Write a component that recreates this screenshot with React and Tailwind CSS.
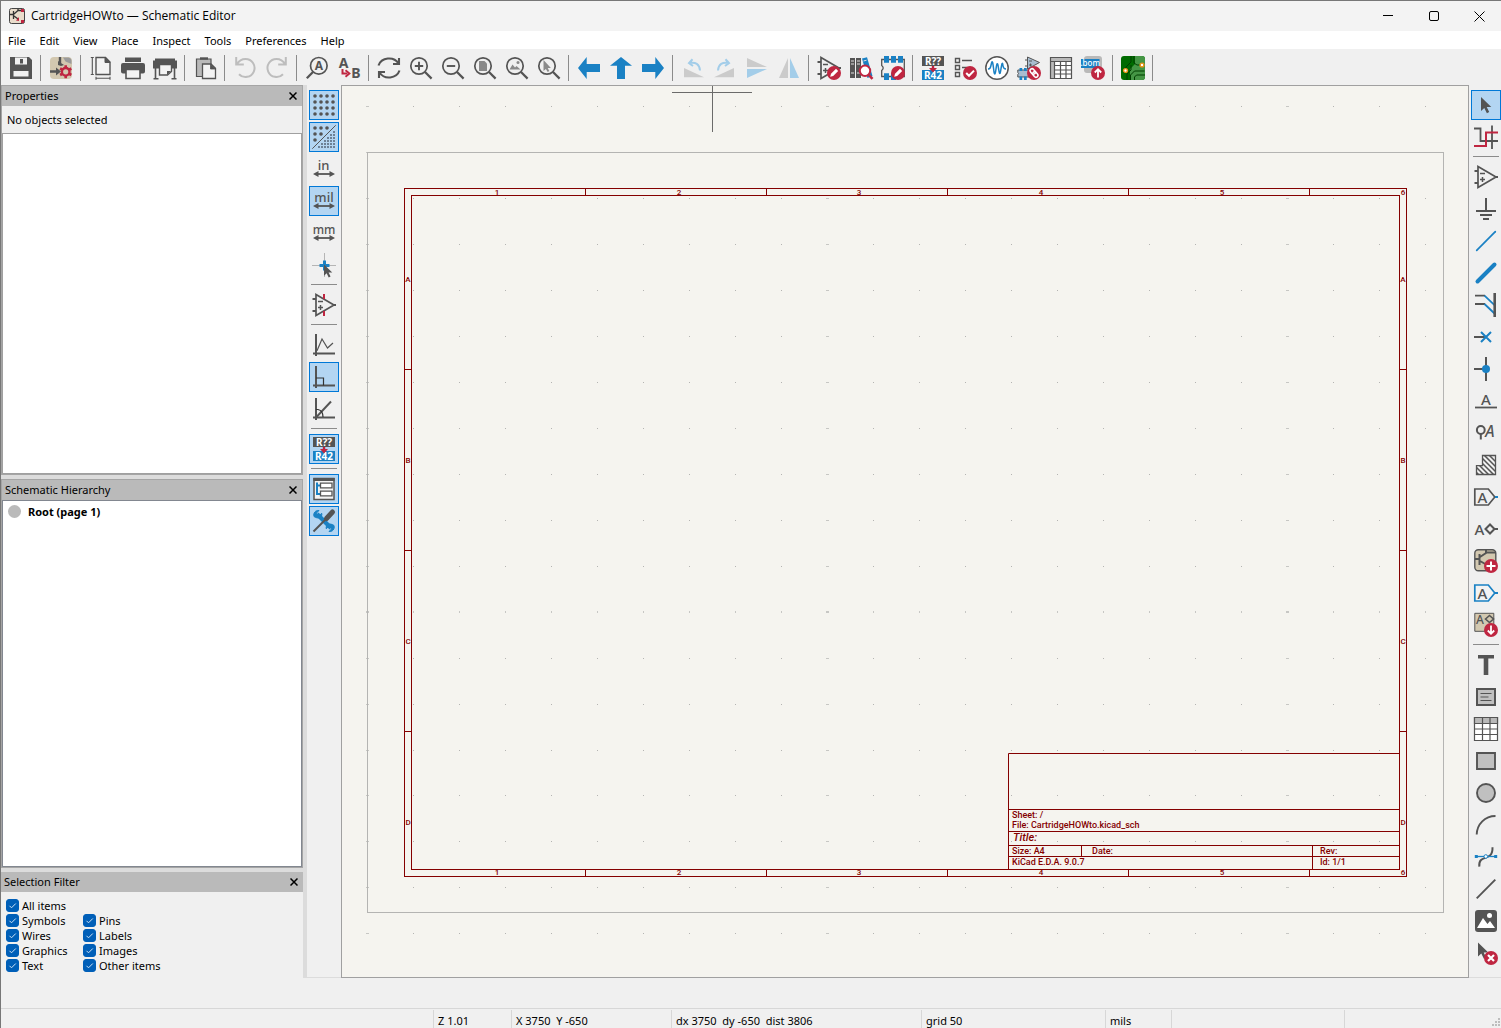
import React from "react";

const D = "#545454";
const B = "#1a81c4";
const R = "#bf2641";
const BEIGE = "#d3c8b0";

function Svg({ children }) {
  return (
    <svg width="24" height="24" viewBox="0 0 24 24" fill="none" aria-hidden="true" className="block shrink-0 overflow-visible">
      {children}
    </svg>
  );
}

function Letter({ x, y, size = 12, fill = D, bold, italic, anchor = "middle", children }) {
  return (
    <text x={x} y={y} fontSize={size} fill={fill} fontWeight={bold ? 700 : 500} fontStyle={italic ? "italic" : "normal"} textAnchor={anchor} fontFamily="'Noto Sans', sans-serif">
      {children}
    </text>
  );
}

/* Red round badge in the lower right corner of an icon */
function Badge({ kind }) {
  return (
    <g>
      <circle cx="17" cy="17" r="7" fill={R} />
      {kind === "pencil" && <path d="M13.2 20.8l.8-3 5-5 2.2 2.2-5 5z" fill="#fff" />}
      {kind === "check" && <path d="M13.2 17l2.8 2.8 5-5.2" stroke="#fff" strokeWidth="2" />}
      {kind === "up" && <path d="M17 21.5v-8M13.8 16.5l3.2-3.3 3.2 3.3" stroke="#fff" strokeWidth="1.8" />}
      {kind === "down" && <path d="M17 12.5v8M13.8 17.5l3.2 3.3 3.2-3.3" stroke="#fff" strokeWidth="1.8" />}
      {kind === "plus" && <path d="M17 12.5v9M12.5 17h9" stroke="#fff" strokeWidth="2" />}
      {kind === "x" && <path d="M14 14l6 6M20 14l-6 6" stroke="#fff" strokeWidth="2.2" />}
      {kind === "link" && (
        <g stroke="#fff" strokeWidth="1.5" transform="rotate(50 17 17)">
          <rect x="12" y="15" width="6" height="4" rx="2" />
          <rect x="16" y="15" width="6" height="4" rx="2" />
        </g>
      )}
    </g>
  );
}

const opamp = (
  <g stroke={D} strokeWidth="1.7">
    <path d="M4 1.5v21L22 12z" />
    <path d="M.5 6H4M.5 18H4M22 12h2" strokeWidth="2" />
    <path d="M6 8.5h5M6 14.5h5M8.5 12v5" strokeWidth="1.5" />
  </g>
);

const lens = (
  <g stroke={D}>
    <circle cx="10" cy="10" r="8.2" strokeWidth="1.7" />
    <path d="M16 16l6.6 6.6" strokeWidth="2.2" />
  </g>
);

const cursorPath = "M0 0v14l3.3-3 2.6 5.2 2.3-1.2-2.5-5h4.6z";

const axes = <path d="M4 1v22M1 20.5h22" stroke={D} strokeWidth="2" />;

const unitArrow = (
  <g>
    <path d="M4 17h16" stroke={D} strokeWidth="1.8" />
    <path d="M1 17l5.500-3v6zM23 17l-5.500-3v6z" fill={D} />
  </g>
);

const annotate = (
  <g>
    <rect x="1" y="0" width="22" height="10" fill={D} />
    <rect x="1" y="14" width="22" height="10" fill={B} />
    <Letter x={12} y={8.7} size={10} bold fill="#fff">R??</Letter>
    <Letter x={12} y={22.8} size={10} bold fill="#fff">R42</Letter>
    <path d="M10.8 10h2.4v2H16l-4 4.5L8 12h2.8z" fill={R} />
  </g>
);

const symbolTile = (
  <g>
    <rect x=".8" y=".8" width="21" height="21" rx="3.5" fill={BEIGE} stroke={D} strokeWidth="1.4" />
    <path d="M1 10h4M5.5 5v11M6 8l6-4V.8M6 12l7 4M12 3.5h10" stroke={D} strokeWidth="2" />
  </g>
);

const icons = {
  save: (
    <g>
      <path d="M1 1h19l3 3v19H1z" fill={D} />
      <path d="M6 1.5h12v7H6zM4.5 15h15v5.5h-15z" fill="#f0f0f0" />
      <rect x="11" y="3" width="3" height="4.5" fill={D} />
    </g>
  ),
  schematicSetup: (
    <g>
      <rect x="1" y="1" width="22" height="22" rx="4" fill={BEIGE} />
      <path d="M11 1v6M1 15.500h6" stroke={D} strokeWidth="2.4" />
      <path d="M7 11.500v8l5-4z" fill={D} />
      <path d="M14 1.500l2.500 4 6 2.500V5q0-3-3-3.500z" fill="#9b9b9b" />
      <path d="M9 5l6 4-3 1-3-1z" fill={D} />
      <circle cx="16.7" cy="15.8" r="3.8" stroke={R} strokeWidth="2.4" />
      <path d="M16.7 9.3v3M16.7 19.3v3M11.1 12.5l2.6 1.5M19.7 17.5l2.6 1.5M11.1 19l2.6-1.5M19.7 14l2.6-1.5" stroke={R} strokeWidth="2.6" />
    </g>
  ),
  page: (
    <g stroke={D}>
      <path d="M7 1.5h9.5l4.5 4.5v12.5H7z" fill="#f3f3f3" strokeWidth="1.4" />
      <path d="M16 1.5v5h5z" fill={D} strokeWidth="1" />
      <path d="M3.3 1.5v17M1.8 1.5h3M1.8 18.5h3M7 22.3h14M7 20.8v3M21 20.8v3" strokeWidth="1.1" />
    </g>
  ),
  print: (
    <g>
      <path d="M4 1.5h16V6H4zM2 7h20q2 0 2 2v6.5q0 2-2 2H2q-2 0-2-2V9q0-2 2-2z" fill={D} />
      <path d="M5 13.5h14v9H5z" fill="#f3f3f3" stroke={D} strokeWidth="1.6" />
    </g>
  ),
  plot: (
    <g>
      <path d="M2 2.5h20v2h2v8H0v-8h2z" fill={D} />
      <path d="M2.5 12v10.5M21.5 12v10.5M.5 22.7h5M18.5 22.7h5" stroke={D} strokeWidth="1.6" />
      <path d="M6.5 8.5h12v7l-4 3.5h-8z" fill="#f3f3f3" stroke={D} strokeWidth="1.4" />
      <path d="M18 15l-4 4v-4z" fill={D} />
    </g>
  ),
  paste: (
    <g stroke={D}>
      <path d="M3.500 3h14.500v17.500H3.500z" fill="#b9b9b9" strokeWidth="1.2" />
      <path d="M7 2.500h8" strokeWidth="2.400" />
      <path d="M9.500 8h8.500l4.500 4.300V22.500H9.500z" fill="#f3f3f3" strokeWidth="1.3" />
      <path d="M17.500 8v5h5z" fill={D} strokeWidth=".8" />
    </g>
  ),
  undo: <path d="M3.2 1v7.5h7.6M3.8 8.3C6 4.5 9 3 12.5 3a9 9 0 1 1-6.5 15.2" stroke="#bdbdbd" strokeWidth="2" />,
  redo: <path d="M20.8 1v7.5h-7.6M20.2 8.3C18 4.5 15 3 11.5 3a9 9 0 1 0 6.500 15.2" stroke="#bdbdbd" strokeWidth="2" />,
  find: (
    <g>
      <circle cx="13.8" cy="9.8" r="8.3" stroke={D} strokeWidth="1.7" />
      <path d="M8 16l-6.2 6.2" stroke={D} strokeWidth="2.3" />
      <Letter x={13.8} y={14} size={12} bold>A</Letter>
    </g>
  ),
  replace: (
    <g>
      <Letter x={6.5} y={11.5} size={14} bold>A</Letter>
      <Letter x={19} y={22} size={14} bold>B</Letter>
      <path d="M5.5 13v4.5h5" stroke={R} strokeWidth="2" />
      <path d="M8.5 14.2l4 3.3-4 3.3" stroke={R} strokeWidth="1.8" />
    </g>
  ),
  refresh: (
    <g stroke={D} strokeWidth="2.1">
      <path d="M1.5 9.5A11 10 0 0 1 21.5 7.5M22 2v6h-6M22.5 14.5A11 10 0 0 1 2.5 16.5M2 22v-6h6" />
    </g>
  ),
  zoomIn: <g>{lens}<path d="M10 5.8v8.4M5.8 10h8.4" stroke={D} strokeWidth="1.9" /></g>,
  zoomOut: <g>{lens}<path d="M5.8 10h8.4" stroke={D} strokeWidth="1.9" /></g>,
  zoomPage: <g>{lens}<path d="M6 5h5.500L14 7.500V15H6z" fill="#8a8a8a" /></g>,
  zoomObjects: <g>{lens}<path d="M4.500 13.500l3-5 2.500 3 1.500-1.500 4 3.500z" fill="#8a8a8a" /><circle cx="13" cy="6.500" r="1.500" fill="#8a8a8a" /></g>,
  zoomSelection: <g>{lens}<path d="M6.500 4v11l2.400-2 1.800 3 1.600-1-1.600-3h3.200z" fill="#8a8a8a" /></g>,
  left: <path d="M1 12L9.700 1v7H23v8H9.700v7z" fill={B} />,
  up: <path d="M12 1L23 9.700h-7V23H8V9.700H1z" fill={B} />,
  right: <path d="M23 12L14.300 1v7H1v8h13.300v7z" fill={B} />,
  rotateLeft: (
    <g>
      <path d="M3 12v9.200h20z" fill="#cbcbcb" />
      <path d="M11.500 3.200L8 7l4 3M8.500 7c6-1 10 1 10.500 7.500" stroke="#a3cde9" strokeWidth="2" />
    </g>
  ),
  rotateRight: (
    <g>
      <path d="M21 12v9.200H1z" fill="#cbcbcb" />
      <path d="M12.500 3.200L16 7l-4 3M15.500 7C9.500 6 5.500 8 5 14.500" stroke="#a3cde9" strokeWidth="2" />
    </g>
  ),
  mirrorV: <g><path d="M2 2v9h20z" fill="#cbcbcb" /><path d="M2 22v-9h20z" fill="#a3cde9" /></g>,
  mirrorH: <g><path d="M2 22h9V2z" fill="#cbcbcb" /><path d="M22 22h-9V2z" fill="#a3cde9" /></g>,
  symbolEditor: <g>{opamp}<Badge kind="pencil" /></g>,
  library: (
    <g>
      <path d="M1 2h5v20H1zM7 2h5v20H7z" fill={D} />
      <path d="M13 2.500l5-1.200L23.500 20l-5 2z" fill={B} />
      <path d="M2 5h3M2 8h3M2 17h3M8 5h3M8 8h3M8 17h3M14.500 5l3-.8" stroke="#dedede" strokeWidth="1" />
      <circle cx="16" cy="14.800" r="5.200" fill="#fff" stroke={R} strokeWidth="2" />
      <path d="M19.800 18.800l3.700 4" stroke={R} strokeWidth="2.600" />
    </g>
  ),
  footprintEditor: (
    <g>
      <path d="M2 3.500h21.300v17H.7v-6q3-2.500 0-5v-6H3" stroke={D} strokeWidth="1.300" />
      <path d="M3 0h5v6.700H3zM10 0h5v6.700h-5zM17 0h5v6.700h-5zM3 17.300h5V24H3zM10 17.300h5V24h-5z" fill={B} />
      <Badge kind="pencil" />
    </g>
  ),
  annotate,
  erc: (
    <g>
      <path d="M2.500 2.500h4v4h-4zM2.500 9.500h4v4h-4zM2.500 16.500h4v4h-4zM9 4.500h10M9 11.500h5" stroke={D} strokeWidth="1.400" />
      <Badge kind="check" />
    </g>
  ),
  simulator: (
    <g>
      <circle cx="12" cy="12" r="11.200" fill="#fff" stroke={D} strokeWidth="1.500" />
      <path d="M3 13c2 0 2.500-1 3.300-5C7.500 2.500 8 8 9 16c.8 4 1.500 1 2-3 .8-6 1.500-7 2.300-2 .8 5 1.500 10 2.500 3C17 6 17.500 6 18 10c.4 2.500 1 3 3 3" stroke={B} strokeWidth="1.500" />
    </g>
  ),
  assign: (
    <g>
      <path d="M10.500 1v12l12-6.500z" fill="#a8bdd0" stroke={D} strokeWidth="1" />
      <path d="M8 4h2.500M8 10h2.500M12 5h3M12 9h3M13.500 7.500v3" stroke={D} strokeWidth="1" />
      <path d="M.8 14h15v7H.8v-2.500q1.500-1 0-2z" fill="#a8bdd0" stroke={D} strokeWidth="1" />
      <path d="M2.500 12h2.700v3H2.500zM7 12h2.700v3H7zM2.500 20.500h2.700v3.500H2.500zM7 20.500h2.700v3.500H7z" fill={B} />
      <Badge kind="link" />
    </g>
  ),
  fields: (
    <g stroke={D}>
      <path d="M1.500 1.500h21v21h-21z" fill="#fff" />
      <path d="M1.500 2h21v3h-21zM1.500 5H5v17H1.500z" fill="#b9b9b9" stroke="none" />
      <path d="M1.500 1.500h21v21h-21zM1.500 5.500h21M5.500 5.500v17M11.500 5.500v17M17 5.500v17M5.500 9.500h17M5.500 14h17M5.500 18h17" strokeWidth="1.200" />
    </g>
  ),
  bom: (
    <g>
      <rect x="3" y="0" width="18" height="17" rx="3" fill="#b9b9b9" />
      <rect x="0" y="3" width="18.500" height="9" fill={B} />
      <Letter x={9.2} y={10.4} size={8} fill="#fff">.bom</Letter>
      <Badge kind="up" />
    </g>
  ),
  pcb: (
    <g>
      <rect width="24" height="24" rx="3" fill="#006b00" />
      <path d="M14 0h7q3 0 3 3v18q0 3-3 3H9V13l5-5z" fill="#459645" />
      <path d="M10 0v6l-5 5v3M13 0v7l3 2h5M6 24v-6l4-4V9M9.500 24v-5l4-4h10M13.500 24v-3l2-2H24" stroke="#003f00" strokeWidth="1" />
      <circle cx="21" cy="9" r="1.900" fill="#fff" stroke="#e99115" strokeWidth="1.400" />
      <circle cx="4.500" cy="14.500" r="1.900" fill="#fff" stroke="#e99115" strokeWidth="1.400" />
    </g>
  ),
  grid: (
    <g fill={D}>
      {[3, 9, 15, 21].map((y) => [3, 9, 15, 21].map((x) => <circle key={x + "-" + y} cx={x} cy={y} r="1.800" />))}
    </g>
  ),
  gridOverride: (
    <g fill={D}>
      {[[3, 3], [9, 3], [15, 3], [3, 9], [9, 9], [3, 15]].map(([x, y]) => <circle key={x + "-" + y} cx={x} cy={y} r="1.800" />)}
      <path d="M.3 23.700L23.700.3" stroke={D} strokeWidth="1" />
      {[0, 1, 2, 3, 4, 5].map((r) => Array.from({ length: r + 1 }, (_, c) => (
        <rect key={r + "-" + c} x={21 - c * 3} y={6 + r * 3} width="2" height="2" fill="#6d8196" />
      )))}
    </g>
  ),
  inch: <g><Letter x={11.5} y={13} size={13}>in</Letter>{unitArrow}</g>,
  mil: <g><Letter x={12} y={13} size={13}>mil</Letter>{unitArrow}</g>,
  mm: <g><Letter x={12} y={13} size={12}>mm</Letter>{unitArrow}</g>,
  crosshair: (
    <g>
      <path d="M12.500 0v24M0 12.500h24" stroke="#b5b5b5" strokeWidth="1" />
      <path d="M12.500 7.500v10M7.500 12.500h10" stroke={B} strokeWidth="3" />
      <g transform="translate(12 11.500) scale(.8)"><path d={cursorPath} fill={D} /></g>
    </g>
  ),
  hiddenPins: <g>{opamp}<path d="M12 1v5M12 18v5" stroke={R} strokeWidth="2" /></g>,
  lineFree: <g>{axes}<path d="M5 17.700L10 6l5.500 9 5.500-5" stroke={D} strokeWidth="1.200" /></g>,
  line90: <g>{axes}<path d="M4 13h7.500v7.500" stroke="#333" strokeWidth="1.200" /></g>,
  line45: <g>{axes}<path d="M4 20.500L19 4.500" stroke={D} strokeWidth="2" /><path d="M4 12.500h2q5 1 5 7.500" stroke="#333" strokeWidth="1.200" /></g>,
  hierarchy: (
    <g>
      <path d="M2 1.500h20v21H2z" fill="#f3f3f3" stroke={D} strokeWidth="1.500" />
      <path d="M1.300 1h21.400v3H1.300z" fill={D} />
      <path d="M5 5.500V17h3M5 8.500h3" stroke={B} strokeWidth="2" />
      <path d="M8.500 6.200h11.500v4.600H8.500zM8.500 14.200h11.500v4.600H8.500z" fill="#fff" stroke={D} strokeWidth="1.300" />
    </g>
  ),
  tools: (
    <g>
      <path d="M5 5l14 14" stroke={B} strokeWidth="4.200" />
      <path d="M2 7.500C1 4 3.500 1 7 1.500L4.500 4l.7 2 2 .7 2.500-2.500c1 4-3.200 6.500-7.700 3.300z" fill={B} stroke={B} strokeWidth="1" />
      <path d="M22 16.500c1 3.500-1.500 6.500-5 6l2.500-2.500-.7-2-2-.7-2.500 2.500c-1-4 3.200-6.500 7.700-3.300z" fill={B} stroke={B} strokeWidth="1" />
      <path d="M1.500 22.500L15 9" stroke={D} strokeWidth="2" />
      <path d="M14.500 9.500l6-6.500" stroke={D} strokeWidth="5" strokeLinecap="round" />
    </g>
  ),
  select: <g transform="translate(7 4)"><path d={cursorPath} fill={D} /></g>,
  highlight: (
    <g>
      <path d="M0 3.500h6.500V16H12M12 16h12M18 .500V24" stroke={D} strokeWidth="1.800" />
      <path d="M0 21h12V7.500h12" stroke={R} strokeWidth="2" />
    </g>
  ),
  opamp,
  power: <path d="M12 1v13M2 14h20M6 18h12M9 22h6" stroke={D} strokeWidth="2" />,
  wire: <path d="M2.700 21.300L21.300 2.700" stroke={B} strokeWidth="1.700" strokeLinecap="round" />,
  bus: <path d="M3.500 20.500l17-17" stroke={B} strokeWidth="4" strokeLinecap="round" />,
  busEntry: (
    <g>
      <path d="M1 2.700h10M1 11h10" stroke={D} strokeWidth="1.800" />
      <path d="M10.500 2.700l10 9.500M10.500 11l10 9.500" stroke={B} strokeWidth="1.800" />
      <path d="M20.700 0v24" stroke={D} strokeWidth="2.600" />
    </g>
  ),
  noConnect: <g><path d="M0 12h12" stroke={D} strokeWidth="2" /><path d="M7 7l10 10M17 7L7 17" stroke={B} strokeWidth="2" /></g>,
  junction: <g><path d="M0 12h12M12 0v24" stroke={D} strokeWidth="2" /><circle cx="12" cy="12" r="4" fill={B} /></g>,
  label: <g><Letter x={12} y={15.5} size={15}>A</Letter><path d="M1 18.500h22" stroke={D} strokeWidth="1.800" /></g>,
  netclass: <g><circle cx="6.800" cy="9" r="3.900" stroke={D} strokeWidth="2" /><path d="M6.800 13v5.500" stroke={D} strokeWidth="2" /><Letter x={16} y={15.5} size={16} italic>A</Letter></g>,
  ruleArea: (
    <g stroke={D}>
      <clipPath id="hatch-area"><path d="M2.500 12.700h6V2.500h13v19h-19z" /></clipPath>
      <g clipPath="url(#hatch-area)" strokeWidth="1.500">
        <path d="M-9-2l26 26M-4-2l26 26M1-2l26 26M6-2l26 26M11-2l26 26M-14-2l26 26M-19-2l26 26" />
      </g>
      <path d="M2.500 12.700h6V2.500h13v19h-19z" strokeWidth="1.300" />
    </g>
  ),
  globalLabel: <g><path d="M.8 4h13.500l6.500 8-6.500 8H.8z" stroke={D} strokeWidth="1.700" /><path d="M21 12h3" stroke={B} strokeWidth="2" /><Letter x={8.5} y={17.5} size={15}>A</Letter></g>,
  hierLabel: <g><Letter x={5.5} y={17.5} size={15}>A</Letter><path d="M11.500 12l4.500-4.500 4.500 4.500-4.500 4.500zM20.500 12H24" stroke={D} strokeWidth="2" /></g>,
  addSheet: <g>{symbolTile}<Badge kind="plus" /></g>,
  sheetPin: <g><path d="M.8 4h13.500l6.500 8-6.500 8H.8z" fill="#f3f3f3" stroke={B} strokeWidth="1.700" /><path d="M21 12h3" stroke={B} strokeWidth="2" /><Letter x={8.5} y={17.5} size={15}>A</Letter></g>,
  importPins: (
    <g>
      <path d="M.8.300h19v18H.8z" fill={BEIGE} stroke={D} strokeWidth="1" />
      <Letter x={6} y={10.5} size={12}>A</Letter>
      <path d="M11.500 6l4-3.500L19.500 6l-4 3.500z" stroke={D} strokeWidth="1.600" />
      <Badge kind="down" />
    </g>
  ),
  text: <path d="M4 2h16v3.500h-5.700V22H9.700V5.500H4z" fill={D} />,
  textBox: <g><path d="M3 4h18v16H3z" fill="#c0c0c0" stroke={D} strokeWidth="2" /><path d="M6.500 8.500h11M6.500 12h8M6.500 15.500h11" stroke={D} strokeWidth="1.200" /></g>,
  table: (
    <g stroke={D} strokeWidth="1.200">
      <path d="M.5.500h23v23H.5z" fill="#fff" />
      <path d="M.5.500h23v6H.5z" fill="#b9b9b9" />
      <path d="M8.500.500v23M16 .500v23M.5 12h23M.5 17.500h23" />
    </g>
  ),
  rect: <path d="M3 4h18v16H3z" fill="#c0c0c0" stroke={D} strokeWidth="1.900" />,
  circle: <circle cx="12" cy="12" r="9" fill="#c0c0c0" stroke={D} strokeWidth="1.900" />,
  arc: <path d="M2.700 21.500C3 11 11 3 21.500 3" stroke={D} strokeWidth="1.900" />,
  bezier: (
    <g>
      <path d="M5.300 21.700C4 8 19 18 18.500 2.300" stroke={D} strokeWidth="2" />
      <path d="M2 11.500h20" stroke={B} strokeWidth="1.300" />
      <path d="M.8 10h3v3h-3zM20.200 10h3v3h-3z" fill={B} />
      <circle cx="11.800" cy="11.500" r="1.800" fill="#fff" stroke={B} />
    </g>
  ),
  line: <path d="M2.700 21.300L21.300 2.700" stroke={D} strokeWidth="1.900" />,
  image: <g><rect x="1" y="1" width="22" height="22" rx="3" fill={D} /><path d="M3 19l6-10 4.500 6 2.500-3 5 7z" fill="#fff" /><circle cx="15.500" cy="6.500" r="2.500" fill="#fff" /></g>,
  delete: <g><g transform="translate(4 1.500)"><path d={cursorPath} fill={D} /></g><Badge kind="x" /></g>,
};

const topTools = [
  ["save", "Save"], null, ["schematicSetup", "Schematic setup"], null,
  ["page", "Page settings"], ["print", "Print"], ["plot", "Plot"], null,
  ["paste", "Paste"], null, ["undo", "Undo"], ["redo", "Redo"], null,
  ["find", "Find"], ["replace", "Find and replace"], null,
  ["refresh", "Refresh"], ["zoomIn", "Zoom in"], ["zoomOut", "Zoom out"], ["zoomPage", "Zoom to fit"], ["zoomObjects", "Zoom to objects"], ["zoomSelection", "Zoom to selection"], null,
  ["left", "Navigate back"], ["up", "Navigate up"], ["right", "Navigate forward"], null,
  ["rotateLeft", "Rotate counterclockwise"], ["rotateRight", "Rotate clockwise"], ["mirrorV", "Mirror vertically"], ["mirrorH", "Mirror horizontally"], null,
  ["symbolEditor", "Symbol editor"], ["library", "Symbol library browser"], ["footprintEditor", "Footprint editor"], null,
  ["annotate", "Annotate"], ["erc", "Electrical rules checker"], ["simulator", "Simulator"], ["assign", "Assign footprints"], ["fields", "Symbol fields table"], ["bom", "Generate BOM"], null,
  ["pcb", "Open PCB editor"], null,
];

const leftTools = [
  ["grid", "Show grid", true], ["gridOverride", "Grid overrides", true], ["inch", "Inches"], ["mil", "Mils", true], ["mm", "Millimeters"], ["crosshair", "Full-window crosshairs"], null,
  ["hiddenPins", "Show hidden pins"], null,
  ["lineFree", "Any angle lines"], ["line90", "90 degree lines", true], ["line45", "45 degree lines"], null,
  ["annotate", "Annotate automatically", true], null,
  ["hierarchy", "Hierarchy navigator", true], ["tools", "Properties manager", true],
];

const rightTools = [
  ["select", "Select items", true], ["highlight", "Highlight nets"], null,
  ["opamp", "Place symbols"], ["power", "Place power symbols"], ["wire", "Draw wires"], ["bus", "Draw buses"], ["busEntry", "Wire to bus entries"], ["noConnect", "No connect flags"], ["junction", "Junctions"], ["label", "Net labels"], ["netclass", "Net class directives"], ["ruleArea", "Rule areas"], ["globalLabel", "Global labels"], ["hierLabel", "Hierarchical labels"], ["addSheet", "Hierarchical sheets"], ["sheetPin", "Sheet pins"], ["importPins", "Sync sheet pins"], null,
  ["text", "Text"], ["textBox", "Text boxes"], ["table", "Tables"], ["rect", "Rectangles"], ["circle", "Circles"], ["arc", "Arcs"], ["bezier", "Bezier curves"], ["line", "Lines"], ["image", "Images"], ["delete", "Delete tool"],
];

function SideToolbar({ items, label }) {
  return (
    <div role="toolbar" aria-label={label} className="flex shrink-0 flex-col items-center pt-1">
      {items.map((t, i) =>
        t ? (
          <button
            key={i}
            type="button"
            aria-label={t[1]}
            aria-pressed={!!t[2]}
            className={t[2] ? "my-px grid size-[30px] place-items-center border border-[#0078d7] bg-[#b3d5f2]" : "my-px grid size-[30px] place-items-center"}
          >
            <Svg>{icons[t[0]]}</Svg>
          </button>
        ) : (
          <div key={i} className="h-2 w-[26px] pt-[3px]"><div className="h-px w-full bg-[#8b8b8b]" /></div>
        )
      )}
    </div>
  );
}

function PanelHeader({ title }) {
  return (
    <div className="flex h-5 shrink-0 items-center justify-between bg-[#bababa] pl-[3px] pr-[3px]">
      <h2>{title}</h2>
      <button type="button" aria-label={"Close " + title} className="grid size-3 place-items-center">
        <svg width="8" height="8" viewBox="0 0 8 8" aria-hidden="true"><path d="M.5.500l7 7M7.500.500l-7 7" stroke="#000" strokeWidth="1.500" /></svg>
      </button>
    </div>
  );
}

function Check({ label }) {
  return (
    <label className="flex h-[15px] items-center gap-[3px]">
      <span className="grid size-[13px] place-items-center">
        <input type="checkbox" defaultChecked className="peer col-start-1 row-start-1 size-[13px] appearance-none rounded-[3px] border border-[#8a8a8a] bg-white checked:border-[#005fb8] checked:bg-[#005fb8]" />
        <svg width="9" height="9" viewBox="0 0 9 9" fill="none" aria-hidden="true" className="pointer-events-none invisible col-start-1 row-start-1 peer-checked:visible">
          <path d="M1.500 4.800l2 2L7.800 2.500" stroke="#cfe2f5" strokeWidth="1" />
        </svg>
      </span>
      {label}
    </label>
  );
}

const dots = [];
for (let r = 0; r < 19; r++) {
  for (let c = 0; c < 24; c++) {
    dots.push([Math.round(25 + c * 46), Math.round(20.35 + r * 45.94), c % 10 === 0, r === 11]);
  }
}

function SheetText({ x, y, size = 9, italic, anchor = "start", children }) {
  return (
    <text x={x} y={y} fontSize={size} fill="#840000" stroke="none" fontStyle={italic ? "italic" : "normal"} fontWeight="500" textAnchor={anchor} fontFamily="Roboto, 'Liberation Sans', sans-serif">
      {children}
    </text>
  );
}

/* Drawing sheet, one unit per pixel */
function Sheet() {
  const cols = [154, 336, 516, 698, 879, 1060];
  const rows = [193, 374, 555, 736];
  return (
    <svg className="block h-full w-full" role="img" aria-label="Schematic sheet">
      <g fill="#b4b4b2">
        {dots.map(([x, y, wide, tall], i) => (
          <rect key={i} x={wide ? x - 1 : x} y={tall ? y - 1 : y} width={wide ? 3 : 1} height={tall ? 2 : 1} opacity={wide || tall ? 0.7 : 1} />
        ))}
      </g>
      <rect x="25.500" y="66.500" width="1076" height="760" fill="none" stroke="#b4b4b2" />
      <g fill="none" stroke="#840000">
        <rect x="62.500" y="102.500" width="1002" height="688" />
        <rect x="69.500" y="109.500" width="988" height="674" />
        <path d="M243.500 103v6M424.500 103v6M605.500 103v6M786.500 103v6M967.500 103v6" />
        <path d="M243.500 784v6M424.500 784v6M605.500 784v6M786.500 784v6M967.500 784v6" />
        <path d="M63 283.500h6M63 464.500h6M63 645.500h6M1058 283.500h6M1058 464.500h6M1058 645.500h6" />
        <path d="M666.500 783V667.500H1057M667 723.500h390M667 745.500h390M667 759.500h390M667 770.500h390M739.500 760v10M970.500 760v23" />
      </g>
      {cols.map((x, i) => (
        <g key={x}>
          <SheetText x={x + 1} y={109} size={8} anchor="middle">{i + 1}</SheetText>
          <SheetText x={x + 1} y={789} size={8} anchor="middle">{i + 1}</SheetText>
        </g>
      ))}
      {rows.map((y, i) => (
        <g key={y}>
          <SheetText x={66} y={y + 3} size={8} anchor="middle">{"ABCD"[i]}</SheetText>
          <SheetText x={1061} y={y + 3} size={8} anchor="middle">{"ABCD"[i]}</SheetText>
        </g>
      ))}
      <SheetText x={670} y={732}>Sheet: /</SheetText>
      <SheetText x={670} y={742}>File: CartridgeHOWto.kicad_sch</SheetText>
      <SheetText x={671} y={755} size={11} italic>Title:</SheetText>
      <SheetText x={670} y={768}>Size: A4</SheetText>
      <SheetText x={750} y={768}>Date:</SheetText>
      <SheetText x={978} y={768}>Rev:</SheetText>
      <SheetText x={670} y={779}>KiCad E.D.A. 9.0.7</SheetText>
      <SheetText x={978} y={779}>Id: 1/1</SheetText>
      <path d="M330 6.500h80M370.500 0v46" stroke="#6b6b6a" />
    </svg>
  );
}

const menus = ["File", "Edit", "View", "Place", "Inspect", "Tools", "Preferences", "Help"];

export default function App() {
  return (
    <div className="flex min-h-screen flex-col border-l border-t border-[#777] bg-[#f0f0f0] font-['Noto_Sans',sans-serif] text-[11px] leading-4 text-black">
      <header className="flex h-[30px] shrink-0 items-center justify-between bg-[#f3f3f3] pl-2">
        <div className="flex items-center gap-1.5">
          <svg width="16" height="16" viewBox="0 0 16 16" fill="none" aria-hidden="true">
            <rect x=".5" y=".5" width="15" height="15" rx="2" fill="#e9dccb" stroke="#444" />
            <path d="M1 6.500h3M4.500 3v8M5 6l4-3.500V1M5 8l4 3M9 2.500h6" stroke="#333" strokeWidth="1.300" />
            <path d="M10 13V9l-3 3.500z" fill={R} />
            <path d="M12 1h3v3h-3zM12 12h3v3h-3z" fill={R} />
          </svg>
          <h1 className="font-['Open_Sans',sans-serif] text-xs">CartridgeHOWto — Schematic Editor</h1>
        </div>
        <div className="flex">
          <button type="button" aria-label="Minimize" className="grid h-[30px] w-[46px] place-items-center"><svg width="11" height="11" viewBox="0 0 11 11"><path d="M0 4.500h10" stroke="#000" /></svg></button>
          <button type="button" aria-label="Maximize" className="grid h-[30px] w-[46px] place-items-center"><svg width="11" height="11" viewBox="0 0 11 11" fill="none"><rect x=".5" y=".5" width="9" height="9" rx="1.500" stroke="#000" /></svg></button>
          <button type="button" aria-label="Close" className="grid h-[30px] w-[44px] place-items-center"><svg width="11" height="11" viewBox="0 0 11 11"><path d="M.5.500l10 10M10.500.500l-10 10" stroke="#000" /></svg></button>
        </div>
      </header>

      <nav aria-label="Main menu" className="flex h-[18px] shrink-0 items-center bg-white pt-0.5">
        {menus.map((m) => <button key={m} type="button" className="px-[7px]">{m}</button>)}
      </nav>

      <div role="toolbar" aria-label="Main toolbar" className="flex h-9 shrink-0 items-center pl-1 pt-[2px]">
        {topTools.map((t, i) =>
          t ? (
            <button key={i} type="button" aria-label={t[1]} className="grid size-8 shrink-0 place-items-center"><Svg>{icons[t[0]]}</Svg></button>
          ) : (
            <div key={i} className="w-2 shrink-0 pl-[3px]"><div className="h-[26px] w-px bg-[#8b8b8b]" /></div>
          )
        )}
      </div>

      <main className="flex flex-1">
        <aside className="flex w-[306px] shrink-0 flex-col gap-1 border-r-4 border-[#dcdcdc] bg-[#dcdcdc]">
          <section className="flex flex-1 flex-col border border-[#a5a5a5] bg-[#f0f0f0]">
            <PanelHeader title="Properties" />
            <p className="px-[5px] pb-[5px] pt-1.5">No objects selected</p>
            <div className="flex-1 border border-[#a0a0a0] bg-white" />
          </section>
          <section className="flex flex-1 flex-col border border-[#a5a5a5] bg-[#f0f0f0]">
            <PanelHeader title="Schematic Hierarchy" />
            <ul className="flex-1 border border-[#828790] bg-white px-[5px] pt-[3px]">
              <li className="flex items-center gap-[7px] font-bold">
                <span className="size-[13px] rounded-full bg-[#bababa]" />
                Root (page 1)
              </li>
            </ul>
          </section>
          <section className="bg-[#f0f0f0]">
            <PanelHeader title="Selection Filter" />
            <div className="grid w-max grid-cols-[77px_auto] px-[5px] pb-[5px] pt-1.5">
              <div className="col-span-2"><Check label="All items" /></div>
              {["Symbols", "Pins", "Wires", "Labels", "Graphics", "Images", "Text", "Other items"].map((l) => <Check key={l} label={l} />)}
            </div>
          </section>
        </aside>

        <div className="flex w-[34px] shrink-0 flex-col items-center border-b border-[#dcdcdc]">
          <SideToolbar items={leftTools} label="Display options" />
        </div>

        <div className="relative min-w-0 flex-1 border border-[#a0a0a0] bg-[#f5f4ef]">
          <div className="absolute inset-0"><Sheet /></div>
        </div>

        <div className="flex w-8 shrink-0 justify-end border-b border-[#dcdcdc]">
          <SideToolbar items={rightTools} label="Drawing tools" />
        </div>
      </main>

      <div className="h-[30px] shrink-0" />

      <footer className="flex h-5 shrink-0 items-end border-t border-[#d7d7d7]">
        <div className="h-[18px] flex-1 border-r border-[#d7d7d7]" />
        <div className="h-[18px] w-[78px] border-r border-[#d7d7d7] px-1 pt-[3px]">Z 1.01</div>
        <div className="h-[18px] w-[160px] whitespace-pre border-r border-[#d7d7d7] px-1 pt-[3px]">X 3750  Y -650</div>
        <div className="h-[18px] w-[250px] whitespace-pre border-r border-[#d7d7d7] px-1 pt-[3px]">dx 3750  dy -650  dist 3806</div>
        <div className="h-[18px] w-[184px] border-r border-[#d7d7d7] px-1 pt-[3px]">grid 50</div>
        <div className="h-[18px] w-[66px] border-r border-[#d7d7d7] px-1 pt-[3px]">mils</div>
        <div className="h-[18px] w-[173px] border-r border-[#d7d7d7]" />
        <div className="flex h-[18px] w-[156px] items-end justify-end">
          <svg width="11" height="11" viewBox="0 0 11 11" fill="#bdbdbd" aria-hidden="true">
            <path d="M8 1h2v2H8zM8 4h2v2H8zM5 4h2v2H5zM8 7h2v2H8zM5 7h2v2H5zM2 7h2v2H2z" />
          </svg>
        </div>
      </footer>
    </div>
  );
}
